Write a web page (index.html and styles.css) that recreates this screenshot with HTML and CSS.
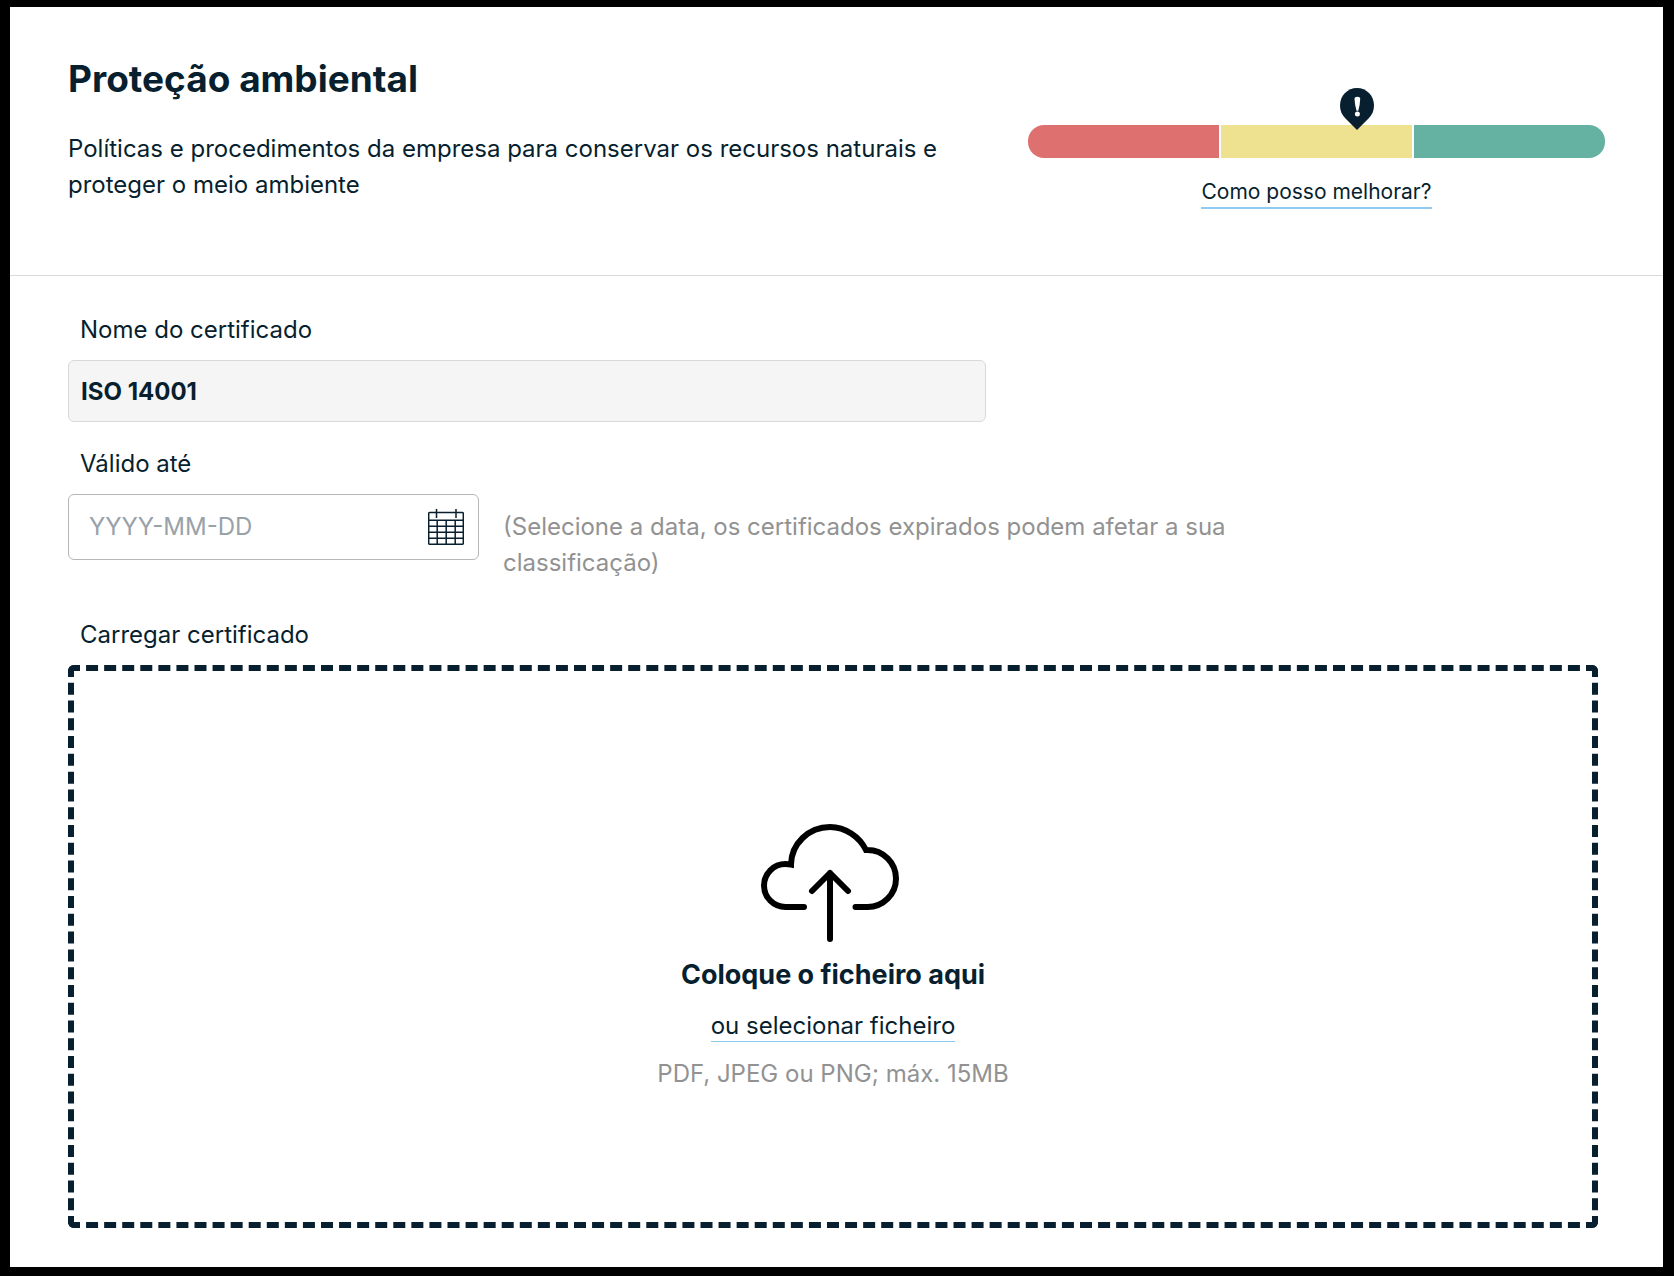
FILE: index.html
```
<!DOCTYPE html>
<html lang="pt">
<head>
  <meta charset="UTF-8">
  <meta name="viewport" content="width=device-width, initial-scale=1.0">
  <title>Proteção ambiental</title>
  <link rel="stylesheet" href="styles.css">
</head>

<body>
  <main class="card">
    <header class="card-header">
      <div class="intro">
        <h1>Proteção ambiental</h1>
        <p>Políticas e procedimentos da empresa para conservar os recursos naturais e proteger o meio ambiente</p>
      </div>

      <div class="rating">
        <div class="rating-bar">
          <span class="segment low"></span>
          <span class="segment medium"></span>
          <span class="segment high"></span>
          <svg class="pin" style="left: 57%" width="34" height="42" viewBox="0 0 34 42" aria-hidden="true">
            <path d="M17 0C7.600 0 0 7.600 0 17.500C0 23 2 27 5.500 30.500L17 42L28.500 30.500C32 27 34 23 34 17.500C34 7.600 26.400 0 17 0Z" fill="#071f2e"/>
            <path d="M14.500 10.800Q14.500 8.800 17.400 8.800Q20.200 8.800 20.200 10.800Q20 17 18.300 22.800H16.500Q14.800 17 14.500 10.800Z" fill="#fff"/>
            <circle cx="17.400" cy="26" r="2.500" fill="#fff"/>
          </svg>
        </div>
        <a href="#" class="link improve">Como posso melhorar?</a>
      </div>
    </header>

    <form class="card-body">
      <label for="certName">Nome do certificado</label>
      <input type="text" id="certName" class="cert-name" value="ISO 14001" readonly>

      <label for="validUntil">Válido até</label>
      <div class="date-row">
        <div class="date-box">
          <input type="text" id="validUntil" placeholder="YYYY-MM-DD">
          <button type="button" class="calendar-btn" aria-label="Abrir calendário">
            <svg width="36" height="36" viewBox="0 0 36 36" fill="none" stroke="#071f2e" stroke-width="1.500">
              <rect x=".7" y="3.500" width="34.600" height="31.800" rx="1"/>
              <path d="M8.500 0V9M28 0V9M.7 11.300H35.300M.7 17.300H35.300M.7 23.300H35.300M.7 29.300H35.300"/>
              <path d="M9.200 11.300V35.300M18.200 11.300V35.300M27.200 11.300V35.300"/>
            </svg>
          </button>
        </div>
        <p class="hint">(Selecione a data, os certificados expirados podem afetar a sua classificação)</p>
      </div>

      <label for="certFile">Carregar certificado</label>
      <div class="drop-zone">
        <svg width="144" height="119" viewBox="0 0 144 119" fill="none" stroke="#000" stroke-width="6" stroke-linecap="round" aria-hidden="true">
          <path d="M43 83H24.500A21.500 21.500 0 0 1 24.500 40Q27 40 30 40.600A39 38 0 0 1 69 3A41 41 0 0 1 105 26H106.500A28.500 28.500 0 0 1 106.500 83H94.500"/>
          <path d="M69 49V115M51 67L69 49L87 67" stroke-linejoin="round"/>
        </svg>
        <strong>Coloque o ficheiro aqui</strong>
        <button type="button" class="link" onclick="document.getElementById('certFile').click()">ou selecionar ficheiro</button>
        <p class="formats">PDF, JPEG ou PNG; máx. 15MB</p>
        <input type="file" id="certFile" accept=".pdf,.jpeg,.jpg,.png" hidden>
      </div>
    </form>
  </main>
</body>
</html>
```
FILE: styles.css
```
* {
  box-sizing: border-box;
}
body {
  margin: 0;
  padding: 7px 11px 8px 10px;
  background: #000;
  color: #071f2e;
  font-family: Inter, "Open Sans", sans-serif;
  font-size: 24px;
  line-height: 36px;
}
h1, p {
  margin: 0;
}
.card {
  background: #fff;
}

/* header */
.card-header {
  display: flex;
  justify-content: space-between;
  gap: 42px;
  padding: 48px 58px 66px;
  border-bottom: 1px solid #d9dadb;
}
.intro {
  flex: 1;
}
h1 {
  font-size: 37px;
  line-height: 48px;
  margin-bottom: 28px;
}
.rating {
  display: flex;
  flex-direction: column;
  align-items: center;
  width: 577px;
  padding-top: 70px;
}
.rating-bar {
  position: relative;
  display: flex;
  gap: 2px;
  width: 100%;
  height: 33px;
  margin-bottom: 18px;
}
.segment {
  flex: 1;
}
.low {
  background: #de7170;
  border-radius: 16px 0 0 16px;
}
.medium {
  background: #eee291;
}
.high {
  background: #65b2a3;
  border-radius: 0 16px 16px 0;
}
.pin {
  position: absolute;
  bottom: 28px;
  margin-left: -17px;
}
.link {
  padding: 0;
  border: none;
  border-bottom: 1px solid #8fcbee;
  background: none;
  color: inherit;
  font: inherit;
  line-height: 31px;
  text-decoration: none;
  cursor: pointer;
}
.improve {
  border-bottom-width: 2px;
  font-size: 21px;
}

/* form */
.card-body {
  padding: 36px 65px 39px 58px;
}
label {
  display: block;
  padding-left: 12px;
  margin-bottom: 12px;
}
input {
  border: none;
  background: none;
  color: inherit;
  font: inherit;
}
.cert-name {
  display: block;
  width: 60%;
  height: 62px;
  padding: 0 12px;
  margin-bottom: 24px;
  border: 1px solid #d8d9da;
  border-radius: 6px;
  background: #f5f5f5;
  font-weight: bold;
}
.date-row {
  display: flex;
  align-items: flex-start;
  gap: 24px;
  margin-bottom: 36px;
}
.date-box {
  display: flex;
  align-items: center;
  width: 411px;
  height: 66px;
  padding: 0 14px 0 20px;
  border: 1px solid #b4b6b8;
  border-radius: 6px;
}
.date-box input {
  flex: 1;
  min-width: 0;
  padding: 0;
}
.date-box input::placeholder {
  color: #98a2a9;
  opacity: 1;
}
.calendar-btn {
  display: flex;
  padding: 0;
  border: none;
  background: none;
  cursor: pointer;
}
.hint {
  max-width: 765px;
  padding-top: 15px;
}
.hint, .formats {
  color: #929292;
}

/* upload area */
.drop-zone {
  display: flex;
  flex-direction: column;
  align-items: center;
  padding: 153px 24px 130px;
  border: 6px dashed #071f2e;
  border-radius: 6px;
}
.drop-zone strong {
  margin: 14px 0 17px;
  font-size: 27px;
}
.formats {
  margin-top: 14px;
}
```
